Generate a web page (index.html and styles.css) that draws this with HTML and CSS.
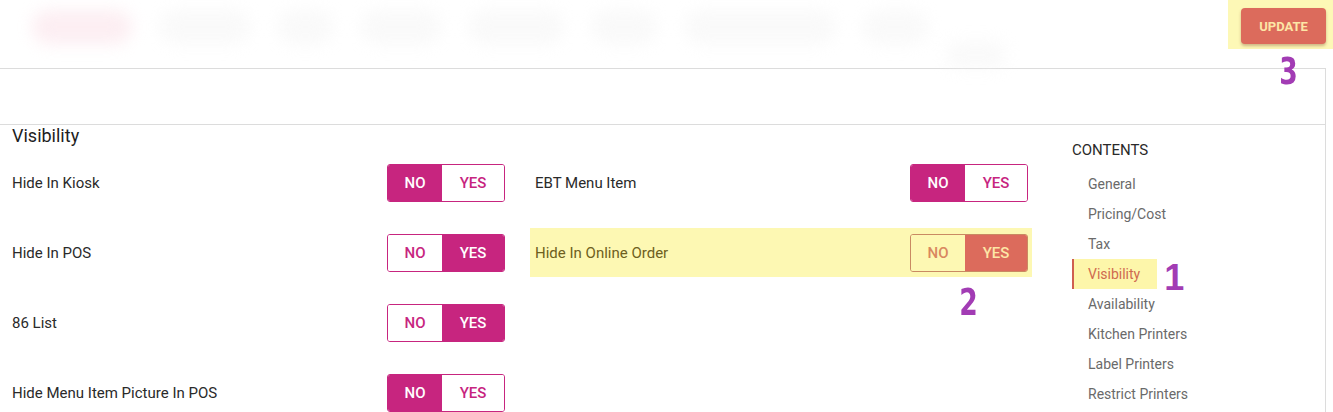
FILE: index.html
```html
<!DOCTYPE html>
<html lang="en">
<head>
<meta charset="utf-8">
<title>Menu Item - Visibility</title>
<link rel="stylesheet" href="styles.css">
</head>
<body>
<header class="topbar">
  <nav class="tabs">
    <span class="tab tab-active"></span>
    <span class="tab w90"></span>
    <span class="tab w55"></span>
    <span class="tab w80"></span>
    <span class="tab w95"></span>
    <span class="tab w65"></span>
    <span class="tab w150"></span>
    <span class="tab w65"></span>
    <span class="tab tab-low"></span>
  </nav>
  <div class="update-hl">
    <button class="update">UPDATE</button>
    <span class="num num-3">3</span>
  </div>
</header>

<section class="card">
  <div class="card-head"></div>
  <div class="card-body">
    <div class="form">
      <h2 class="title">Visibility</h2>
      <div class="grid">
        <div class="row">
          <span class="label">Hide In Kiosk</span>
          <div class="toggle"><span class="seg no on">NO</span><span class="seg yes">YES</span></div>
        </div>
        <div class="row">
          <span class="label">EBT Menu Item</span>
          <div class="toggle"><span class="seg no on">NO</span><span class="seg yes">YES</span></div>
        </div>
        <div class="row">
          <span class="label">Hide In POS</span>
          <div class="toggle"><span class="seg no">NO</span><span class="seg yes on">YES</span></div>
        </div>
        <div class="row row-hl">
          <span class="label">Hide In Online Order</span>
          <div class="toggle toggle-hl"><span class="seg no">NO</span><span class="seg yes on">YES</span></div>
          <span class="num num-2">2</span>
        </div>
        <div class="row">
          <span class="label">86 List</span>
          <div class="toggle"><span class="seg no">NO</span><span class="seg yes on">YES</span></div>
        </div>
        <div class="row row-empty"></div>
        <div class="row">
          <span class="label">Hide Menu Item Picture In POS</span>
          <div class="toggle"><span class="seg no on">NO</span><span class="seg yes">YES</span></div>
        </div>
      </div>
    </div>
    <aside class="toc">
      <div class="toc-title">CONTENTS</div>
      <ul class="toc-list">
        <li class="toc-item">General</li>
        <li class="toc-item">Pricing/Cost</li>
        <li class="toc-item">Tax</li>
        <li class="toc-item toc-active">Visibility<span class="num num-1">1</span></li>
        <li class="toc-item">Availability</li>
        <li class="toc-item">Kitchen Printers</li>
        <li class="toc-item">Label Printers</li>
        <li class="toc-item">Restrict Printers</li>
      </ul>
    </aside>
  </div>
</section>
</body>
</html>
```

FILE: styles.css
```css
* { box-sizing: border-box; }

html, body {
  margin: 0;
  padding: 0;
  background: #ffffff;
  overflow: hidden;
}

body {
  font-family: Roboto, "Liberation Sans", Arial, sans-serif;
  color: #222;
  width: 1333px;
  height: 412px;
}

/* ---------- top bar ---------- */
.topbar {
  height: 68px;
  display: flex;
  justify-content: space-between;
  align-items: flex-start;
}

.tabs {
  display: flex;
  align-items: flex-start;
  gap: 28px;
  padding: 10px 0 0 32px;
}

.tab {
  display: block;
  height: 34px;
  width: 95px;
  border-radius: 18px;
  background: #f3f3f3;
  filter: blur(8px);
  opacity: 0.45;
}
.tab-active { background: #fbe3ea; width: 100px; opacity: 0.6; }
.w90 { width: 90px; }
.w55 { width: 55px; }
.w80 { width: 80px; }
.w95 { width: 95px; }
.w65 { width: 65px; }
.w150 { width: 150px; }
.tab-low { width: 60px; margin: 32px 0 0 -10px; height: 26px; }

.update-hl {
  position: relative;
  width: 105px;
  height: 49px;
  padding: 8px 7px 0 13px;
  background: #fdf8b6;
}

.update {
  display: block;
  width: 85px;
  height: 36px;
  border: none;
  border-radius: 4px;
  background: #dc6b5c;
  color: #fde6a6;
  font-family: Roboto, "Liberation Sans", sans-serif;
  font-weight: 700;
  font-size: 13px;
  box-shadow: 0 2px 3px rgba(120, 60, 40, 0.35);
  padding: 0;
}

/* ---------- annotation numbers ---------- */
.num {
  position: absolute;
  color: #a23cb4;
  font-weight: 700;
  line-height: 1;
}
.num-3, .num-2 {
  font-family: "Liberation Sans Narrow", "DejaVu Sans Condensed", "Liberation Sans", sans-serif;
  font-size: 37px;
  transform: scaleX(0.8);
}
.num-3 { left: 49px; top: 53px; }
.num-2 { left: 427px; top: 56px; }
.num-1 {
  font-family: "Liberation Sans", Arial, sans-serif;
  font-size: 36px;
  left: calc(100% + 12px);
  top: 1px;
}

/* ---------- card ---------- */
.card {
  width: 1326px;
  height: 344px;
  border-top: 1px solid #dcdcdc;
  border-right: 1px solid #dcdcdc;
}

.card-head {
  height: 56px;
  border-bottom: 1px solid #dcdcdc;
}

.card-body {
  display: flex;
  align-items: flex-start;
}

.form {
  width: 1028px;
  padding-left: 12px;
}

.title {
  margin: 0;
  font-size: 18px;
  line-height: 22px;
  font-weight: 400;
  color: #1e1e1e;
}

.grid {
  margin-top: 17px;
  display: grid;
  grid-template-columns: 493px 493px;
  column-gap: 30px;
  row-gap: 32px;
}

.row {
  position: relative;
  height: 38px;
  display: flex;
  align-items: center;
  justify-content: space-between;
}

.row-hl {
  height: 49px;
  margin: -6px -4px -5px -5px;
  padding: 6px 4px 5px 5px;
  background: #fdf8b3;
}

.label {
  font-size: 15px;
  color: #2a2a2a;
}
.row-hl .label { color: #6e5f20; }

.toggle {
  display: flex;
  height: 38px;
  border: 1px solid #c7257f;
  border-radius: 3px;
  overflow: hidden;
}

.seg {
  display: flex;
  align-items: center;
  justify-content: center;
  font-size: 15px;
  font-weight: 500;
  color: #c7257f;
  background: #fff;
}
.seg.no { width: 54px; }
.seg.yes { width: 62px; }
.seg.on {
  background: #c7257f;
  color: #fff;
}

.toggle-hl { border-color: #c98a62; }
.toggle-hl .seg { background: #fdf8b3; color: #d9875f; }
.toggle-hl .seg.on { background: #dc6b5c; color: #fde6a6; }

/* ---------- contents ---------- */
.toc {
  margin-left: 44px;
  padding-top: 15px;
}

.toc-title {
  font-size: 15px;
  line-height: 20px;
  color: #2a2a2a;
}

.toc-list {
  list-style: none;
  margin: 9px 0 0;
  padding: 0;
  display: flex;
  flex-direction: column;
  align-items: flex-start;
}

.toc-item {
  position: relative;
  font-size: 14px;
  line-height: 30px;
  color: #6a6a6a;
  padding: 0 12px 0 14px;
  border-left: 2px solid transparent;
}

.toc-active {
  background: #fdf6aa;
  border-left-color: #cf5f50;
  color: #cf6a4f;
  padding-right: 17px;
}
.toc-active .num-1 { left: calc(100% + 7px); }
```
